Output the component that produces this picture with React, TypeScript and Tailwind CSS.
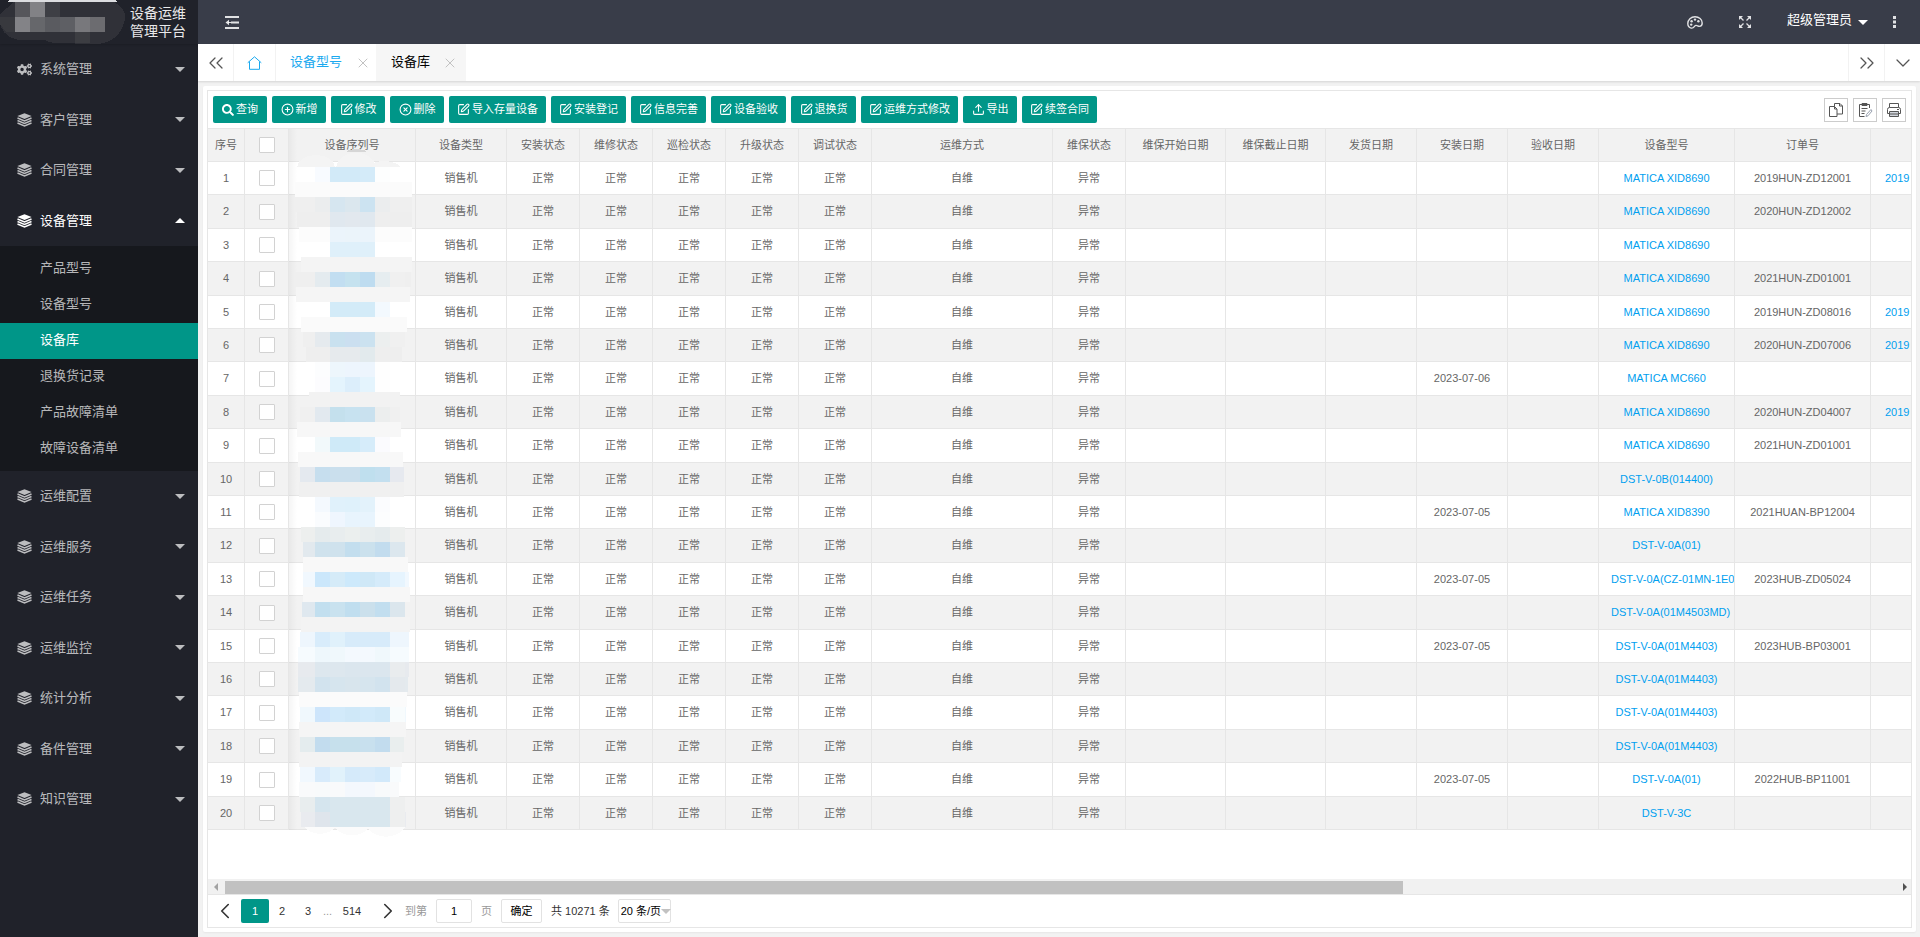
import { useState } from 'react'
import type { ReactNode } from 'react'
import clsx from 'clsx'
import { ChevronDown, ChevronLeft, ChevronRight, ChevronsLeft, ChevronsRight, CirclePlus, CircleX, SquarePen, Upload, X } from 'lucide-react'
import { FaCogs, FaSearch } from 'react-icons/fa'

type IconProps = { className?: string }

function LayersIcon({ className }: IconProps) {
  return (
    <svg viewBox="0 0 15 14" className={className} fill="none" stroke="currentColor" aria-hidden="true">
      <path d="M7.5 0.3 14.6 3.1 7.5 6 0.4 3.1Z" fill="currentColor" stroke="none" />
      <path d="M0.5 5 7.5 7.900 14.500 5M0.5 7.500 7.500 10.400 14.500 7.500M0.5 10 7.500 12.900 14.500 10" strokeWidth="1.4" />
    </svg>
  )
}

function FoldIcon({ className }: IconProps) {
  return (
    <svg viewBox="0 0 14 13" className={className} fill="currentColor" aria-hidden="true">
      <path d="M0 0h14v2H0zM6 5.500h8v2H6zM0 11h14v2H0zM0.5 6.500 4 3.800v5.400z" />
      <path d="M3 6h3v1H3z" />
    </svg>
  )
}

function PaletteIcon({ className }: IconProps) {
  return (
    <svg viewBox="0 0 16 13" className={className} fill="none" stroke="currentColor" strokeWidth="1.4" aria-hidden="true">
      <path d="M4.2 12.1C2 11.6 0.8 9.8 0.8 7.5 0.8 3.6 4 0.8 8 0.8c4 0 7.2 2.7 7.2 6.2 0 2-1.2 3.4-2.8 3.4-1.6 0-2.2-1.3-3.6-1-1.7 0.4-1.7 3.3-4.6 2.7Z" />
      <g fill="currentColor" stroke="none">
        <circle cx="4.2" cy="8.6" r="1.2" />
        <circle cx="4.6" cy="5.2" r="1.2" />
        <circle cx="8" cy="3.6" r="1.2" />
        <circle cx="11.4" cy="5.2" r="1.2" />
      </g>
    </svg>
  )
}

function ExpandIcon({ className }: IconProps) {
  return (
    <svg viewBox="0 0 12 12" className={className} fill="currentColor" stroke="currentColor" aria-hidden="true">
      <path d="M0 0h4L0 4zM12 0v4L8 0zM0 12V8l4 4zM12 12H8l4-4z" stroke="none" />
      <path d="M1.5 1.5 4.5 4.5M10.5 1.5 7.5 4.5M1.5 10.5 4.5 7.5M10.5 10.5 7.5 7.5" strokeWidth="1.3" />
    </svg>
  )
}

function HomeIcon({ className }: IconProps) {
  return (
    <svg viewBox="0 0 15 14" className={className} fill="none" stroke="currentColor" aria-hidden="true">
      <path d="M0.7 6.8 7.5 0.8l6.8 6M2.5 5.5v7.8h10V5.5" strokeWidth="1" />
    </svg>
  )
}

function CopyIcon({ className }: IconProps) {
  return (
    <svg viewBox="0 0 16 16" className={className} fill="none" stroke="currentColor" aria-hidden="true">
      <path d="M1.5 4.5h5l2.5 2.5v7.5h-7.5zM6.5 4.5V7H9" />
      <path d="M6.5 4.5v-3h5.5l2.5 2.5v8H9M11.5 1.5V4h3" />
    </svg>
  )
}

function ExportIcon({ className }: IconProps) {
  return (
    <svg viewBox="0 0 16 16" className={className} fill="none" stroke="currentColor" aria-hidden="true">
      <path d="M12.5 6V2.5H2.5v12h5M5 1.5h5v2H5zM4.5 6.5h6M4.5 9h4M4.5 11.5h3" />
      <path d="M14 7.5 9.5 12.5 9 14.5l2-0.7L15 9z" className="stroke-gray-400" />
    </svg>
  )
}

function PrintIcon({ className }: IconProps) {
  return (
    <svg viewBox="0 0 16 16" className={className} fill="none" stroke="currentColor" aria-hidden="true">
      <path d="M3.5 5.5v-4h9v4M1.5 11.5v-4a2 2 0 0 1 2-2h9a2 2 0 0 1 2 2v4h-2M1.5 11.5h2" />
      <path d="M3.5 9.5h9v5h-9z" className="fill-gray-300" />
      <path d="M4 12h8M11 7.5h2" />
    </svg>
  )
}

function Caret({ up, className }: { up?: boolean; className?: string }) {
  return (
    <svg viewBox="0 0 10 5" className={clsx('h-[5px] w-[10px]', className)} fill="currentColor" aria-hidden="true">
      <path d={up ? 'M0 5 5 0l5 5z' : 'M0 0h10L5 5z'} />
    </svg>
  )
}

const menus = [
  '系统管理', '客户管理', '合同管理', '设备管理', '运维配置', '运维服务',
  '运维任务', '运维监控', '统计分析', '备件管理', '知识管理',
]

const subMenus = ['产品型号', '设备型号', '设备库', '退换货记录', '产品故障清单', '故障设备清单']

const actionIcon = 'size-[13px]'

const actions: { label: string; width: string; icon: ReactNode }[] = [
  { label: '查询', width: 'w-[54px]', icon: <FaSearch className="size-3" /> },
  { label: '新增', width: 'w-[54px]', icon: <CirclePlus className={actionIcon} /> },
  { label: '修改', width: 'w-[54px]', icon: <SquarePen className={actionIcon} /> },
  { label: '删除', width: 'w-[54px]', icon: <CircleX className={actionIcon} /> },
  { label: '导入存量设备', width: 'w-[97px]', icon: <SquarePen className={actionIcon} /> },
  { label: '安装登记', width: 'w-[75px]', icon: <SquarePen className={actionIcon} /> },
  { label: '信息完善', width: 'w-[75px]', icon: <SquarePen className={actionIcon} /> },
  { label: '设备验收', width: 'w-[75px]', icon: <SquarePen className={actionIcon} /> },
  { label: '退换货', width: 'w-[65px]', icon: <SquarePen className={actionIcon} /> },
  { label: '运维方式修改', width: 'w-[97px]', icon: <SquarePen className={actionIcon} /> },
  { label: '导出', width: 'w-[54px]', icon: <Upload className={actionIcon} /> },
  { label: '续签合同', width: 'w-[75px]', icon: <SquarePen className={actionIcon} /> },
]

const columns = [
  { title: '设备序列号', width: 'w-[127px]' },
  { title: '设备类型', width: 'w-[91px]' },
  { title: '安装状态', width: 'w-[73px]' },
  { title: '维修状态', width: 'w-[73px]' },
  { title: '巡检状态', width: 'w-[73px]' },
  { title: '升级状态', width: 'w-[73px]' },
  { title: '调试状态', width: 'w-[73px]' },
  { title: '运维方式', width: 'w-[181px]' },
  { title: '维保状态', width: 'w-[73px]' },
  { title: '维保开始日期', width: 'w-[100px]' },
  { title: '维保截止日期', width: 'w-[100px]' },
  { title: '发货日期', width: 'w-[91px]' },
  { title: '安装日期', width: 'w-[91px]' },
  { title: '验收日期', width: 'w-[91px]' },
  { title: '设备型号', width: 'w-[136px]' },
  { title: '订单号', width: 'w-[136px]' },
]

type Device = { model: string; order?: string; installed?: string; contract?: string }

const devices: Device[] = [
  { model: 'MATICA XID8690', order: '2019HUN-ZD12001', contract: '2019' },
  { model: 'MATICA XID8690', order: '2020HUN-ZD12002' },
  { model: 'MATICA XID8690' },
  { model: 'MATICA XID8690', order: '2021HUN-ZD01001' },
  { model: 'MATICA XID8690', order: '2019HUN-ZD08016', contract: '2019' },
  { model: 'MATICA XID8690', order: '2020HUN-ZD07006', contract: '2019' },
  { model: 'MATICA MC660', installed: '2023-07-06' },
  { model: 'MATICA XID8690', order: '2020HUN-ZD04007', contract: '2019' },
  { model: 'MATICA XID8690', order: '2021HUN-ZD01001' },
  { model: 'DST-V-0B(014400)' },
  { model: 'MATICA XID8390', order: '2021HUAN-BP12004', installed: '2023-07-05' },
  { model: 'DST-V-0A(01)' },
  { model: 'DST-V-0A(CZ-01MN-1E0', order: '2023HUB-ZD05024', installed: '2023-07-05' },
  { model: 'DST-V-0A(01M4503MD)' },
  { model: 'DST-V-0A(01M4403)', order: '2023HUB-BP03001', installed: '2023-07-05' },
  { model: 'DST-V-0A(01M4403)' },
  { model: 'DST-V-0A(01M4403)' },
  { model: 'DST-V-0A(01M4403)' },
  { model: 'DST-V-0A(01)', order: '2022HUB-BP11001', installed: '2023-07-05' },
  { model: 'DST-V-3C' },
]

// masked serial numbers: [left, right, colours of the 15px blocks]
const mask: [number, number, string][] = [
  [8, 119, 'ffffff f8fbff d2eaf8 d2eaf8 d4ebf9 fdfefe ffffff'],
  [6, 123, 'fbfbfb'],
  [6, 123, 'efefef ebedee d6e6f0 dbe7ee cce3f1 ebedee efefef'],
  [8, 123, 'eeeeee eeeeee e0e8ef e2e8ee e0e8ef eeeeee eeeeee'],
  [10, 123, 'fcfcfc fcfcfc ebf4fb ebf4fa ebf4fb fcfcfc fcfcfc'],
  [11, 123, 'ffffff ffffff dff0fa dff0fa dff0fa ffffff ffffff'],
  [12, 123, 'f4f4f4'],
  [6, 122, 'efefef e4ebef c2def1 c5e2ef bedcf0 e6edf0 f0f0f0'],
  [7, 121, 'f5f5f5'],
  [8, 120, 'ffffff ffffff d3ebf8 d3ebf8 d3ebf8 f3f9fe ffffff'],
  [12, 118, 'fafafa'],
  [14, 116, 'efefef e5eaee c9e1ef cbdff0 cbe2f0 ecefef f0f0f0'],
  [17, 113, 'eeeeee eeeeee e6eaed e6eaed e2eaed eeeeee eeeeee'],
  [17, 112, 'ffffff fcfdfe edf6fc edf5fd edf5fd fefefe ffffff'],
  [17, 112, 'ffffff fcfcfe e4f4fd dceefb e4f4fd fefefe ffffff'],
  [20, 111, 'f2f2f2'],
  [11, 111, 'f0f0f0 e2e9ef c4e0ed c7e2f0 c9e1ef eceeee f0f0f0'],
  [8, 112, 'f7f7f7'],
  [8, 113, 'ffffff f2f9fb cfeaf8 cfeaf8 d6ecfa fbfbfe ffffff'],
  [9, 114, 'f8f8f8'],
  [11, 115, 'e4e9ef c6deee cadfed cadfed bfdfee c3dfef e6e9ef'],
  [10, 115, 'f0f0f0'],
  [11, 115, 'ffffff f4f9fe e0f1fb dff1fb e3f2fb fbfcfe ffffff'],
  [11, 115, 'ffffff fafcfe eff6fe e8f4fd e8f4fd fcfdfe ffffff'],
  [12, 116, 'edefee e5ebed e8edee ebefee e8edee e5ebed edefee'],
  [14, 116, 'e2e9ee cfe2ed cfe2ed c3deee cbe1ed c2dcee dce7ee'],
  [14, 119, 'f8f8f8'],
  [14, 120, 'f1f8fe cbe7fb d5ebf8 cde9fb cfe8f7 d5ebfa e6f4fe'],
  [14, 121, 'f7f7f7'],
  [13, 116, 'dfe8ef c2dfef c9e2ef c0deef cbe0ec c2deef dbe6ed'],
  [12, 121, 'f3f3f3'],
  [11, 120, 'eef6fd d8ecfb e0f1fb d7ebfa d7ebfa d7ebfa eef6fd'],
  [9, 120, 'f6fbfe eef7fc f0f8fc f4f9fe f4f9fe f0f8fc f6fbfe'],
  [9, 120, 'e7eaee dde7ee dde7ee dbe6ee dbe6ee dbe6ee e9ecee'],
  [9, 119, 'e4eaee d2e3ee d6e5ee d8e5ed d6e5ee d2e3ee e4e9ed'],
  [10, 118, 'fbfbfb'],
  [11, 117, 'f0f8fd cde5fb d2eafa cfe8f8 d2eafa cfe8f8 f8fcfd'],
  [10, 117, 'f5f5f5'],
  [11, 115, 'e4ecee c2dcee c6e0ec c6e0ec c8e0ee c2dcee e9eeee'],
  [10, 113, 'f3f3f3'],
  [11, 112, 'f1f8fe d8ebfb e1f2fb d5eafa d7ebfa d2e9fa f8fcfe'],
  [10, 110, 'f9fafb f8fafb f9fafb f4f8fd f4f8fd f8fafb f9fafb'],
  [11, 116, 'e8edee d5e5ee d9e7ee d9e7ee d9e7ee d9e7ee eeefef'],
  [12, 117, 'e9ebef dfe5ec d9e7ee d9e7ee d9e7ee d9e7ee eeefef'],
]

function SerialMask() {
  return (
    <svg viewBox="0 0 127 701" className="pointer-events-none absolute top-0 left-[81px] h-[701px] w-[127px] overflow-visible" shapeRendering="crispEdges" aria-hidden="true">
      <path d="M57 23c4-4 17-4 21 0z" fill="#d6d6d6" />
      <path d="M8 38c2-16 36-16 38 0zM47 38c2-19 38-19 40 0zM80 38c6-8 24-8 32 0z" fill="#f4f4f4" />
      {mask.map(([left, right, colours], i) => {
        const cells = colours.split(' ')
        const y = 38 + i * 15
        return (
          <g key={i}>
            <rect x={left} y={y} width={right - left} height={15} fill={`#${cells[0]}`} />
            {cells.length > 1 && cells.map((c, j) => {
              const x = Math.max(11 + j * 15, left)
              return <rect key={j} x={x} y={y} width={Math.min(26 + j * 15, right) - x} height={15} fill={`#${c}`} />
            })}
          </g>
        )
      })}
      <path d="M16 698c6 9 24 9 30 0zM46 698c6 11 28 11 34 0zM78 698c8 13 30 13 38 0z" fill="#fbfbfb" />
    </svg>
  )
}

function LogoMask() {
  return (
    <svg viewBox="0 0 126 44" className="h-11 w-[126px] shrink-0" shapeRendering="crispEdges" aria-hidden="true">
      <path d="M14 2h100c8 4 11 9 11 15s-3 15-12 22c-8 6-28 7-40 4-12 1-24 0-28-3H18C6 37 0 30 0 20V14z" fill="#303138" />
      <path d="M10 0h105l3 2H7z" fill="#dcdde0" />
      <path d="M15 2h15v15H15z" fill="#56565b" />
      <path d="M30 2h15v15H30z" fill="#828286" />
      <path d="M45 2h15v15H45z" fill="#3e3f45" />
      <path d="M0 17h15v15H6L0 24z" fill="#38393e" />
      <path d="M15 17h15v15H15z" fill="#838387" />
      <path d="M30 17h15v15H30z" fill="#66676b" />
      <path d="M45 17h15v15H45z" fill="#5a5b60" />
      <path d="M60 17h15v15H60z" fill="#5e5f64" />
      <path d="M75 17h15v15H75z" fill="#78787c" />
      <path d="M90 17h15v15H90z" fill="#6c6c70" />
      <path d="M75 32h15v11H75z" fill="#3c3d42" />
    </svg>
  )
}

function Checkbox({ label }: { label: string }) {
  return (
    <input
      type="checkbox"
      aria-label={label}
      className="mx-auto block size-4 appearance-none rounded-[1px] border border-[#d2d2d2] bg-white checked:border-[#009688] checked:bg-[#009688]"
    />
  )
}

function Sidebar() {
  const [open, setOpen] = useState('设备管理')

  return (
    <aside className="w-[198px] shrink-0 bg-[#20222a] text-white/70">
      <div className="flex h-11 items-center gap-1 shadow-[0_1px_2px_rgba(0,0,0,0.15)]">
        <LogoMask />
        <div className="text-[14px] leading-[18px] whitespace-nowrap text-white/90">设备运维<br />管理平台</div>
      </div>
      <nav className="text-[13px]">
        {menus.map((name, i) => (
          <div key={name}>
            <button
              type="button"
              onClick={() => setOpen(open === name ? '' : name)}
              className={clsx('flex w-full items-center pr-[13px] pl-[17px]', i % 2 ? 'h-[51px]' : 'h-[50px]', open === name && 'text-white')}
            >
              {i === 0 ? <FaCogs className="size-[15px]" /> : <LayersIcon className="h-[14px] w-[15px]" />}
              <span className="ml-2">{name}</span>
              <Caret up={open === name} className="ml-auto" />
            </button>
            {open === name && (
              <div className="bg-[#16181d] pt-[5px] pb-1">
                {subMenus.map(sub => (
                  <a key={sub} href="#" className={clsx('block h-9 pl-10 leading-[34px]', sub === '设备库' && 'bg-[#009688] text-white')}>
                    {sub}
                  </a>
                ))}
              </div>
            )}
          </div>
        ))}
      </nav>
    </aside>
  )
}

function TopBar() {
  return (
    <header className="flex h-11 items-center bg-[#393d49] text-white/85">
      <button type="button" aria-label="收起菜单" className="ml-[27px]"><FoldIcon className="h-[13px] w-[14px]" /></button>
      <button type="button" aria-label="主题" className="ml-auto"><PaletteIcon className="h-[13px] w-4" /></button>
      <button type="button" aria-label="全屏" className="ml-9"><ExpandIcon className="size-3" /></button>
      <button type="button" className="ml-9 flex items-center gap-[6px] pb-1 text-[13px] text-white">
        超级管理员
        <Caret className="mt-1" />
      </button>
      <button type="button" aria-label="更多" className="mr-6 ml-[25px]">
        <svg viewBox="0 0 3 12" className="h-3 w-[3px]" fill="currentColor" aria-hidden="true">
          <path d="M0 0h3v3H0zM0 4.5h3v3H0zM0 9h3v3H0z" />
        </svg>
      </button>
    </header>
  )
}

function TabBar() {
  return (
    <div className="relative flex h-[37px] items-stretch bg-white text-[13px] text-[#555] shadow-[0_1px_2px_rgba(0,0,0,0.12)]">
      <button type="button" aria-label="向左" className="flex w-9 items-center justify-center border-r border-[#f2f2f2]">
        <ChevronsLeft className="size-6" strokeWidth={1.25} />
      </button>
      <a href="#" aria-label="主页" className="flex w-[42px] items-center justify-center border-r border-[#f2f2f2] text-[#1aa9ef]">
        <HomeIcon className="h-[14px] w-[15px]" />
      </a>
      <div className="flex w-[100px] items-center justify-between pr-[5px] pl-[14px]">
        <a href="#" className="pb-[2px] text-[#1aa9ef]">设备型号</a>
        <button type="button" aria-label="关闭设备型号"><X className="size-4 text-[#c2c2c2]" strokeWidth={1.5} /></button>
      </div>
      <div className="flex w-[90px] items-center justify-between bg-[#f6f6f6] pr-2 pl-[15px]">
        <a href="#" className="pb-[2px] text-black">设备库</a>
        <button type="button" aria-label="关闭设备库"><X className="size-4 text-[#c2c2c2]" strokeWidth={1.5} /></button>
      </div>
      <button type="button" aria-label="向右" className="ml-auto flex w-9 items-center justify-center border-l border-[#f2f2f2]">
        <ChevronsRight className="size-6" strokeWidth={1.25} />
      </button>
      <button type="button" aria-label="标签操作" className="flex w-9 items-center justify-center border-l border-[#f2f2f2]">
        <ChevronDown className="size-6" strokeWidth={1.25} />
      </button>
    </div>
  )
}

function Toolbar() {
  const tool = 'flex size-6 items-center justify-center border border-[#ccc] text-[#555]'

  return (
    <div className="flex h-[38px] items-center gap-[5px] border-b border-[#e6e6e6] pr-[5px] pl-[5px]">
      {actions.map(a => (
        <button key={a.label} type="button" className={clsx('flex h-[27px] shrink-0 items-center justify-center gap-[2px] rounded-[2px] bg-[#009688] text-[11px] whitespace-nowrap text-white', a.width)}>
          {a.icon}
          {a.label}
        </button>
      ))}
      <div className="ml-auto flex gap-[5px]">
        <button type="button" aria-label="筛选列" className={tool}><CopyIcon className="size-4" /></button>
        <button type="button" aria-label="导出" className={tool}><ExportIcon className="size-4" /></button>
        <button type="button" aria-label="打印" className={tool}><PrintIcon className="size-4" /></button>
      </div>
    </div>
  )
}

function Cell({ children }: { children?: ReactNode }) {
  return (
    <td className="border-r border-b border-[#e6e6e6] p-0 pb-px">
      <div className="overflow-hidden px-3 whitespace-nowrap">{children}</div>
    </td>
  )
}

function DeviceTable() {
  const head = 'border-r border-b border-[#e6e6e6] p-0 font-normal'

  return (
    <div className="relative flex-1 overflow-hidden">
      <table className="w-[1799px] table-fixed border-separate border-spacing-0 text-center text-[11px] leading-4 text-[#666]">
        <thead>
          <tr className="h-[33px] bg-[#f2f2f2]">
            <th className={clsx(head, 'w-[37px]')}>序号</th>
            <th className={clsx(head, 'w-11')}><Checkbox label="全选" /></th>
            {columns.map(c => <th key={c.title} className={clsx(head, c.width)}>{c.title}</th>)}
            <th className={clsx(head, 'w-[136px]')}></th>
          </tr>
        </thead>
        <tbody>
          {devices.map((d, i) => (
            <tr key={i} className={clsx(i % 5 === 1 || i % 5 === 3 ? 'h-[34px]' : 'h-[33px]', i % 2 === 1 && 'bg-[#f2f2f2]')}>
              <td className="border-r border-b border-[#e6e6e6] p-0 pb-px">{i + 1}</td>
              <td className="border-r border-b border-[#e6e6e6] p-0"><Checkbox label={`选择第 ${i + 1} 行`} /></td>
              <Cell />
              <Cell>销售机</Cell>
              <Cell>正常</Cell>
              <Cell>正常</Cell>
              <Cell>正常</Cell>
              <Cell>正常</Cell>
              <Cell>正常</Cell>
              <Cell>自维</Cell>
              <Cell>异常</Cell>
              <Cell />
              <Cell />
              <Cell />
              <Cell>{d.installed}</Cell>
              <Cell />
              <Cell><a href="#" className="text-[#01a0f0]">{d.model}</a></Cell>
              <Cell>{d.order}</Cell>
              <td className="border-r border-b border-[#e6e6e6] p-0 pb-px pl-[14px] text-left">
                {d.contract && <a href="#" className="text-[#01a0f0]">{d.contract}</a>}
              </td>
            </tr>
          ))}
        </tbody>
      </table>
      <div className="absolute top-0 left-[81px] h-[701px] w-2 bg-linear-to-r from-black/4 to-transparent" />
      <SerialMask />
    </div>
  )
}

function ScrollBar() {
  return (
    <div className="flex h-4 items-center border-b border-[#e6e6e6] bg-[#f1f1f1]">
      <svg viewBox="0 0 17 8" className="h-2 w-[17px] shrink-0" fill="#a3a3a3" aria-hidden="true"><path d="M10 0v8L6 4z" /></svg>
      <div className="flex-1"><div className="mt-px h-[13px] w-[70.6%] bg-[#c1c1c1]" /></div>
      <svg viewBox="0 0 17 8" className="h-2 w-[17px] shrink-0" fill="#505050" aria-hidden="true"><path d="M9 0v8l4-4z" /></svg>
    </div>
  )
}

function Pager() {
  const box = 'h-6 rounded-[2px] border border-[#e2e2e2] bg-white text-black'

  return (
    <div className="flex h-8 items-center text-[11px] text-[#333]">
      <button type="button" aria-label="上一页" className="flex w-[33px] justify-center"><ChevronLeft className="size-[26px]" strokeWidth={1.5} /></button>
      <button type="button" className="h-6 w-7 rounded-[2px] bg-[#009688] text-white">1</button>
      <button type="button" className="w-[26px]">2</button>
      <button type="button" className="w-[26px]">3</button>
      <span className="w-[13px] text-center text-[#999]">...</span>
      <button type="button" className="w-9">514</button>
      <button type="button" aria-label="下一页" className="flex w-[35px] justify-center"><ChevronRight className="size-[26px]" strokeWidth={1.5} /></button>
      <label className="flex items-center gap-[9px] text-[#999]">
        到第
        <input type="text" defaultValue="1" className={clsx(box, 'w-9 text-center')} />
        页
      </label>
      <button type="button" className={clsx(box, 'ml-[9px] w-[41px]')}>确定</button>
      <span className="ml-[9px]">共 10271 条</span>
      <div className="relative ml-2">
        <select aria-label="每页条数" className={clsx(box, 'block w-[53px] appearance-none pl-[2px]')}>
          <option>20 条/页</option>
        </select>
        <Caret className="pointer-events-none absolute top-[10px] right-0 text-[#c2c2c2]" />
      </div>
    </div>
  )
}

export default function App() {
  return (
    <div className="flex min-h-screen bg-[#f2f2f2] font-['Liberation_Sans','Noto_Sans_CJK_SC',sans-serif]">
      <Sidebar />
      <div className="flex min-w-0 flex-1 flex-col">
        <TopBar />
        <TabBar />
        <main className="flex flex-1 flex-col pt-[5px] pr-1 pb-[5px] pl-[5px]">
          <div className="flex flex-1 flex-col rounded-[2px] bg-white p-1 shadow-[0_1px_2px_rgba(0,0,0,0.05)]">
            <div className="flex flex-1 flex-col border border-[#e6e6e6]">
              <Toolbar />
              <DeviceTable />
              <ScrollBar />
              <Pager />
            </div>
          </div>
        </main>
      </div>
    </div>
  )
}
